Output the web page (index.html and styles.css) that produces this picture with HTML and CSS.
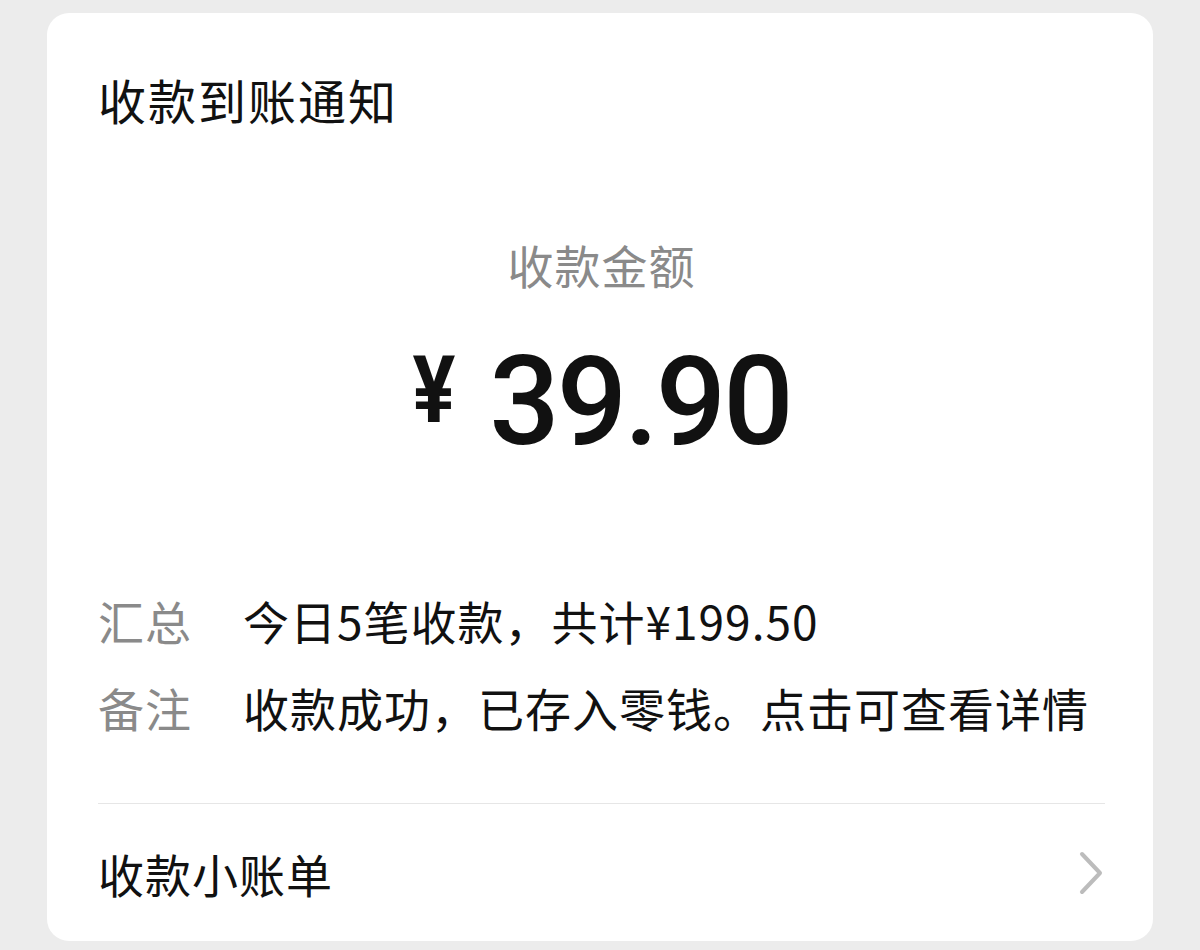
FILE: index.html
```html
<!DOCTYPE html>
<html lang="zh-CN">
<head>
  <meta charset="UTF-8" />
  <meta name="viewport" content="width=device-width, initial-scale=1" />
  <title>收款到账通知</title>
  <link rel="stylesheet" href="styles.css">
</head>
<body>

  <div class="card">
    <div class="title">收款到账通知</div>

    <div class="amount-label">收款金额</div>
    <div class="amount">
      <span class="currency">¥</span><span class="value">39.90</span>
    </div>

    <div class="rows">
      <div class="row">
        <span class="label">汇总</span>
        <span class="text">今日5笔收款，共计¥199.50</span>
      </div>
      <div class="row">
        <span class="label">备注</span>
        <span class="text">收款成功，已存入零钱。点击可查看详情</span>
      </div>
    </div>

    <div class="footer">
      <span>收款小账单</span>
      <svg class="chevron" width="26" height="46" viewBox="0 0 26 46">
        <path d="M4 4 L22 23 L4 42" fill="none" stroke="#bcbcbc" stroke-width="4" stroke-linecap="round" stroke-linejoin="round"/>
      </svg>
    </div>
  </div>

</body>
</html>
```

FILE: styles.css
```css
body {
  margin: 0;
  padding: 13px 47px 9px;
  background: #ececec;
  font-family: "Noto Sans CJK SC", "Noto Sans", sans-serif;
  color: #111111;
}

.card {
  background: #ffffff;
  border-radius: 22px;
  height: 928px;
  padding: 0 48px 0 51px;
  box-sizing: border-box;
  display: flex;
  flex-direction: column;
}

.title {
  margin-top: 53px;
  font-size: 48px;
  line-height: 66px;
  letter-spacing: 2px;
}

.amount-label {
  margin-top: 99px;
  text-align: center;
  font-size: 46px;
  line-height: 66px;
  letter-spacing: 1px;
  color: #8a8a8a;
}

.amount {
  margin-top: 40px;
  display: flex;
  justify-content: center;
  align-items: flex-start;
  height: 130px;
}

.currency {
  font-family: Roboto, "Liberation Sans", sans-serif;
  font-weight: 700;
  font-size: 80px;
  line-height: 80px;
  margin-top: 8px;
  margin-right: 34px;
  display: inline-block;
  transform: scaleY(1.15);
  transform-origin: top;
}

.value {
  font-family: Roboto, "Liberation Sans", sans-serif;
  font-weight: 500;
  font-size: 124px;
  line-height: 130px;
  letter-spacing: -3px;
}

.rows {
  margin-top: 110px;
}

.row {
  display: flex;
  font-size: 46px;
  line-height: 87px;
  letter-spacing: 1px;
}

.row .label {
  width: 145px;
  flex-shrink: 0;
  color: #8a8a8a;
}

.footer {
  margin-top: 52px;
  border-top: 1px solid #e6e6e6;
  flex: 1;
  display: flex;
  align-items: center;
  justify-content: space-between;
  font-size: 46px;
  letter-spacing: 1px;
}

.chevron {
  margin-right: 1px;
}
```
